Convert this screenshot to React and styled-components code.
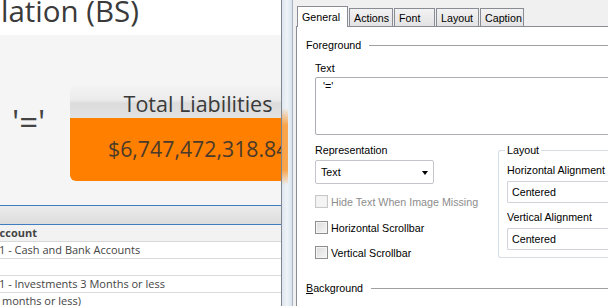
import React from "react";
import styled, { createGlobalStyle } from "styled-components";

const GlobalStyle = createGlobalStyle`
  html, body {
    margin: 0;
    padding: 0;
    background: #ffffff;
  }
`;

const Screen = styled.div`
  width: 608px;
  height: 306px;
  display: flex;
  overflow: hidden;
  background: #ffffff;
`;

/* ---------- dashboard behind the dialog ---------- */

const Dashboard = styled.div`
  width: 281px;
  flex: none;
  display: flex;
  flex-direction: column;
  overflow: hidden;
  font-family: "Open Sans", "Liberation Sans", sans-serif;
  color: #3c3c3c;
`;

const TitleStrip = styled.div`
  height: 35px;
  flex: none;
  background: #ffffff;
  overflow: hidden;
`;

const Title = styled.h1`
  margin: -6px 0 0 1px;
  font-size: 29.5px;
  line-height: 34px;
  font-weight: 400;
  color: #3a3a3a;
  white-space: nowrap;
`;

const KpiArea = styled.div`
  height: 170px;
  flex: none;
  background: #f5f5f5;
  display: flex;
  align-items: flex-start;
  padding-top: 50px;
  box-sizing: border-box;
`;

const Equals = styled.div`
  width: 70px;
  flex: none;
  padding-top: 18px;
  padding-left: 12px;
  box-sizing: border-box;
  font-size: 33px;
  line-height: 38px;
  color: #444;
`;

const KpiCard = styled.div`
  width: 256px;
  flex: none;
  border-radius: 6px;
  overflow: hidden;
  display: flex;
  flex-direction: column;
`;

const KpiHeader = styled.div`
  height: 33px;
  background: linear-gradient(#f3f3f3 0%, #ececec 45%, #dcdcdc 55%, #e2e2e2 100%);
  text-align: center;
  font-size: 21.5px;
  line-height: 37px;
  color: #3a3a3a;
  white-space: nowrap;
`;

const KpiValue = styled.div`
  height: 63px;
  background: #ff8000;
  font-size: 21.3px;
  line-height: 62px;
  padding-left: 38px;
  color: #4a3a2a;
  white-space: nowrap;
`;

const Grid = styled.div`
  flex: 1;
  display: flex;
  flex-direction: column;
  background: #ffffff;
  font-size: 11px;
  color: #444;
`;

const GridBand = styled.div`
  height: 18px;
  border-top: 1px solid #3f7cc0;
  border-bottom: 1px solid #3f7cc0;
  background: linear-gradient(#ececec, #dcdcdc);
`;

const GridRow = styled.div`
  height: 16px;
  line-height: 16px;
  border-bottom: 1px solid #d9d9d9;
  font-weight: ${(p) => (p.$head ? 700 : 400)};
  text-indent: ${(p) => p.$indent}px;
  white-space: nowrap;
  overflow: hidden;
  background: ${(p) => (p.$head ? "#f2f2f2" : "#ffffff")};
`;

/* ---------- glass window frame ---------- */

const Frame = styled.div`
  width: 12px;
  flex: none;
  box-sizing: border-box;
  border-left: 1px solid #7d8793;
  border-right: 1px solid #a9b4c0;
  background:
    linear-gradient(
      transparent 0,
      transparent 108px,
      rgba(255, 140, 20, 0.75) 125px,
      rgba(255, 140, 20, 0.75) 170px,
      transparent 185px
    ) left / 6px 100% no-repeat,
    linear-gradient(90deg, #dfe6ee, #eef3f8 50%, #d9e2ec);
`;

/* ---------- properties dialog ---------- */

const Dialog = styled.div`
  flex: 1;
  display: flex;
  flex-direction: column;
  background: #f0f0f0;
  padding: 5px 0 0 3px;
  font-family: "Liberation Sans", Arial, sans-serif;
  font-size: 10.7px;
  color: #000;
  min-width: 0;
`;

const TabStrip = styled.div`
  display: flex;
  align-items: flex-end;
  height: 21px;
  padding-left: 1px;
  gap: 1px;
`;

const Tab = styled.div`
  height: ${(p) => (p.$active ? 21 : 18)}px;
  width: ${(p) => p.$w}px;
  box-sizing: border-box;
  border: 1px solid #898c95;
  border-bottom: none;
  background: ${(p) => (p.$active ? "#ffffff" : "linear-gradient(#f2f2f2, #e3e3e3)")};
  padding: ${(p) => (p.$active ? "3px 0 0 4px" : "2px 0 0 4px")};
  margin-bottom: ${(p) => (p.$active ? -1 : 0)}px;
  position: relative;
  z-index: ${(p) => (p.$active ? 1 : 0)};
  line-height: 14px;
`;

const Panel = styled.div`
  flex: 1;
  background: #ffffff;
  border-top: 1px solid #898c95;
  border-left: 1px solid #898c95;
  padding: 11px 0 0 9px;
  display: flex;
  flex-direction: column;
  overflow: hidden;
`;

const SectionHead = styled.div`
  display: flex;
  align-items: center;
  gap: 8px;
  height: 14px;
  flex: none;
  margin-top: ${(p) => p.$top || 0}px;
  white-space: nowrap;

  &::after {
    content: "";
    flex: 1;
    border-top: 1px solid #a0a0a0;
  }
`;

const Underlined = styled.span`
  text-decoration: underline;
`;

const SectionBody = styled.div`
  padding-left: 9px;
  display: flex;
  flex-direction: column;
`;

const FieldLabel = styled.div`
  height: 14px;
  line-height: 14px;
  flex: none;
  margin-top: ${(p) => p.$top || 0}px;
  white-space: nowrap;
`;

const TextBox = styled.div`
  margin-top: 2px;
  width: 320px;
  height: 58px;
  box-sizing: border-box;
  border: 1px solid #abadb3;
  border-radius: 2px;
  padding: 1px 7px;
  line-height: 14px;
`;

const Columns = styled.div`
  display: flex;
  align-items: flex-start;
  margin-top: 8px;
`;

const LeftCol = styled.div`
  width: 183px;
  flex: none;
  display: flex;
  flex-direction: column;
`;

const Select = styled.div`
  margin-top: 3px;
  width: 119px;
  height: 24px;
  box-sizing: border-box;
  border: 1px solid #c3c5ca;
  border-radius: 2px;
  display: flex;
  align-items: center;
  justify-content: space-between;
  padding: 0 5px 0 5px;
`;

const Caret = styled.span`
  width: 0;
  height: 0;
  border-left: 3.5px solid transparent;
  border-right: 3.5px solid transparent;
  border-top: 4px solid #000;
  margin-top: 2px;
`;

const CheckRow = styled.div`
  display: flex;
  align-items: center;
  gap: 3px;
  height: 13px;
  margin-top: ${(p) => p.$top}px;
  white-space: nowrap;
  color: ${(p) => (p.$disabled ? "#8d8d8d" : "#000")};
`;

const CheckBox = styled.span`
  width: 13px;
  height: 13px;
  flex: none;
  box-sizing: border-box;
  border: 1px solid ${(p) => (p.$disabled ? "#c8c8c8" : "#8e8f8f")};
  background: ${(p) =>
    p.$disabled
      ? "#f4f4f4"
      : "linear-gradient(135deg, #dcdcdc, #f6f6f6) padding-box"};
  box-shadow: inset 0 0 0 1px ${(p) => (p.$disabled ? "#f0f0f0" : "#f4f4f4")};
`;

const GroupBox = styled.div`
  flex: none;
  width: 140px;
  height: 108px;
  margin-top: 7px;
  box-sizing: border-box;
  border: 1px solid #d5dfe5;
  border-right: none;
  border-radius: 3px 0 0 3px;
  padding: 12px 0 0 8px;
  position: relative;
  display: flex;
  flex-direction: column;
`;

const GroupTitle = styled.span`
  position: absolute;
  top: -8px;
  left: 6px;
  padding: 0 2px;
  background: #ffffff;
  line-height: 14px;
`;

const ComboField = styled.div`
  margin-top: 4px;
  height: 22px;
  flex: none;
  width: 140px;
  box-sizing: border-box;
  border: 1px solid #d0d3d8;
  border-right: none;
  border-radius: 2px 0 0 2px;
  padding-left: 4px;
  line-height: 20px;
`;

const tabs = [
  { label: "General", w: 51, active: true },
  { label: "Actions", w: 44 },
  { label: "Font", w: 41 },
  { label: "Layout", w: 43 },
  { label: "Caption", w: 44 },
];

const rows = [
  { text: "Account", head: true, indent: -8 },
  { text: "1 - Cash and Bank Accounts", indent: -1 },
  { text: "", indent: 0 },
  { text: "1 - Investments 3 Months or less", indent: -1 },
  { text: "months or less)", indent: 2 },
];

export default function App() {
  return (
    <>
      <GlobalStyle />
      <Screen>
        <Dashboard>
          <TitleStrip>
            <Title>lation (BS)</Title>
          </TitleStrip>
          <KpiArea>
            <Equals>'='</Equals>
            <KpiCard>
              <KpiHeader>Total Liabilities</KpiHeader>
              <KpiValue>$6,747,472,318.84</KpiValue>
            </KpiCard>
          </KpiArea>
          <Grid>
            <GridBand />
            {rows.map((r, i) => (
              <GridRow key={i} $head={r.head} $indent={r.indent}>
                {r.text}
              </GridRow>
            ))}
          </Grid>
        </Dashboard>

        <Frame />

        <Dialog>
          <TabStrip>
            {tabs.map((t) => (
              <Tab key={t.label} $active={t.active} $w={t.w}>
                {t.label}
              </Tab>
            ))}
          </TabStrip>
          <Panel>
            <SectionHead>Foreground</SectionHead>
            <SectionBody>
              <FieldLabel $top={9}>Text</FieldLabel>
              <TextBox>'='</TextBox>
              <Columns>
                <LeftCol>
                  <FieldLabel>Representation</FieldLabel>
                  <Select>
                    <span>Text</span>
                    <Caret />
                  </Select>
                  <CheckRow $top={11} $disabled>
                    <CheckBox $disabled />
                    Hide Text When Image Missing
                  </CheckRow>
                  <CheckRow $top={13}>
                    <CheckBox />
                    Horizontal Scrollbar
                  </CheckRow>
                  <CheckRow $top={12}>
                    <CheckBox />
                    Vertical Scrollbar
                  </CheckRow>
                </LeftCol>
                <GroupBox>
                  <GroupTitle>Layout</GroupTitle>
                  <FieldLabel>Horizontal Alignment</FieldLabel>
                  <ComboField>Centered</ComboField>
                  <FieldLabel $top={7}>Vertical Alignment</FieldLabel>
                  <ComboField>Centered</ComboField>
                </GroupBox>
              </Columns>
            </SectionBody>
            <SectionHead $top={22}>
              <span>
                <Underlined>B</Underlined>ackground
              </span>
            </SectionHead>
          </Panel>
        </Dialog>
      </Screen>
    </>
  );
}
